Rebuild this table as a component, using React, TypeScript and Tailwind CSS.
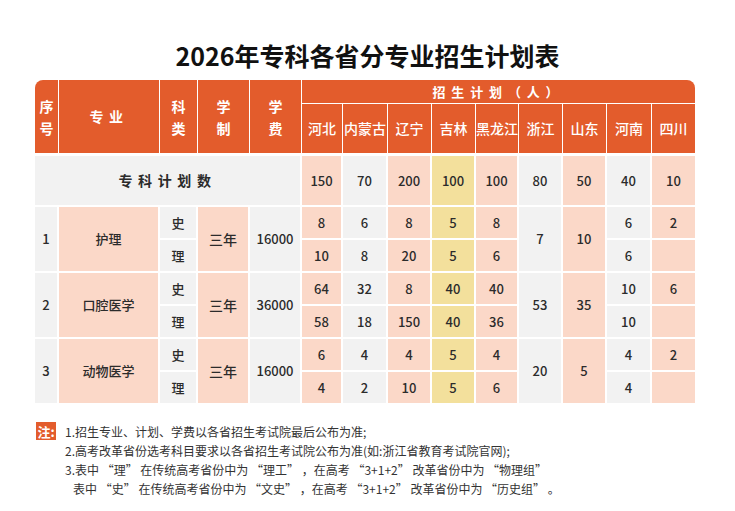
import React from "react"

const HEAD_COLS = "grid-cols-[23px_100px_37px_51px_51px_40px_44px_43px_43px_42px_43px_43px_44px_43px]"
const BODY_COLS = "grid-cols-[22px_99px_36px_50px_50px_39px_43px_42px_42px_41px_42px_42px_43px_43px]"

const peach = "bg-[#fbd8c8]"
const gray = "bg-[#f2f2f2]"
const yellow = "bg-[#f3e09c]"

const provinces = ["河北", "内蒙古", "辽宁", "吉林", "黑龙江", "浙江", "山东", "河南", "四川"]
const provinceBg = [peach, gray, peach, yellow, peach, gray, peach, gray, peach]
const totals = [150, 70, 200, 100, 100, 80, 50, 40, 10]

const majors = [
  {
    no: "1",
    name: "护理",
    fee: "16000",
    // [史, 理] per province; single value = merged cell
    values: [[8, 10], [6, 8], [8, 20], [5, 5], [8, 6], 7, 10, [6, 6], [2, ""]],
  },
  {
    no: "2",
    name: "口腔医学",
    fee: "36000",
    values: [[64, 58], [32, 18], [8, 150], [40, 40], [40, 36], 53, 35, [10, 10], [6, ""]],
  },
  {
    no: "3",
    name: "动物医学",
    fee: "16000",
    values: [[6, 4], [4, 2], [4, 10], [5, 5], [4, 6], 20, 5, [4, 4], [2, ""]],
  },
]

function Cell({ className = "", children }: { className?: string; children?: React.ReactNode }) {
  return <div className={`flex items-center justify-center ${className}`}>{children}</div>
}

function MajorRows({ m }: { m: (typeof majors)[number] }) {
  const first: React.ReactNode[] = []
  const second: React.ReactNode[] = []
  m.values.forEach((v, i) => {
    if (Array.isArray(v)) {
      first.push(<Cell key={`a${i}`} className={provinceBg[i]}>{v[0]}</Cell>)
      second.push(<Cell key={`b${i}`} className={provinceBg[i]}>{v[1]}</Cell>)
    } else {
      first.push(
        <Cell key={`a${i}`} className={`row-span-2 ${provinceBg[i]}`}>
          {v}
        </Cell>
      )
    }
  })
  return (
    <>
      <Cell className={`row-span-2 ${gray}`}>{m.no}</Cell>
      <Cell className={`row-span-2 ${peach}`}>{m.name}</Cell>
      <Cell className={gray}>史</Cell>
      <Cell className={`row-span-2 ${peach} text-[14px]`}>三年</Cell>
      <Cell className={`row-span-2 ${gray}`}>{m.fee}</Cell>
      {first}
      <Cell className={gray}>理</Cell>
      {second}
    </>
  )
}

export default function App() {
  return (
    <div
      className="w-[735px] h-[511px] bg-white text-[#2b2b2b]"
      style={{ fontFamily: '"Noto Sans CJK SC", "Noto Sans", sans-serif' }}
    >
      <h1 className="pt-[38px] text-center text-[25px] leading-[34px] font-bold text-[#111]">
        2026年专科各省分专业招生计划表
      </h1>

      <div className="mt-[8px] ml-[35px] w-[660px]">
        {/* header */}
        <div className={`grid ${HEAD_COLS} grid-rows-[23px_49px] gap-px text-white font-bold text-[14px]`}>
          <Cell className="row-span-2 flex-col leading-[22px] bg-[#e35c2c] rounded-tl-lg">
            <span>序</span>
            <span>号</span>
          </Cell>
          <Cell className="row-span-2 bg-[#e35c2c] tracking-[0.4em]">专业</Cell>
          <Cell className="row-span-2 flex-col leading-[22px] bg-[#e35c2c]">
            <span>科</span>
            <span>类</span>
          </Cell>
          <Cell className="row-span-2 flex-col leading-[22px] bg-[#e35c2c]">
            <span>学</span>
            <span>制</span>
          </Cell>
          <Cell className="row-span-2 flex-col leading-[22px] bg-[#e35c2c]">
            <span>学</span>
            <span>费</span>
          </Cell>
          <Cell className="col-span-9 bg-[#e35c2c] rounded-tr-lg tracking-[0.45em] text-[13px]">
            招生计划（人）
          </Cell>
          {provinces.map((p) => (
            <Cell key={p} className="bg-[#e35c2c] font-medium text-[14px]">
              {p}
            </Cell>
          ))}
        </div>

        {/* body */}
        <div
          className={`mt-[3px] grid ${BODY_COLS} grid-rows-[49px_31px_31px_31px_31px_31px_31px] gap-[2px] text-[13px] font-medium`}
        >
          <Cell className={`col-span-5 ${gray} font-bold text-[14px] tracking-[0.4em]`}>专科计划数</Cell>
          {totals.map((t, i) => (
            <Cell key={i} className={provinceBg[i]}>
              {t}
            </Cell>
          ))}
          {majors.map((m) => (
            <MajorRows key={m.no} m={m} />
          ))}
        </div>
      </div>

      <div className="mt-[19px] ml-[36px] flex gap-[9px] text-[12px] leading-[19px] text-[#333]">
        <div className="h-[18px] w-[20px] bg-[#e35c2c] text-white font-bold text-[13px] flex items-center justify-center">
          注:
        </div>
        <div>
          <p>1.招生专业、计划、学费以各省招生考试院最后公布为准;</p>
          <p>2.高考改革省份选考科目要求以各省招生考试院公布为准(如:浙江省教育考试院官网);</p>
          <p>3.表中 “理” 在传统高考省份中为 “理工” ，在高考 “3+1+2” 改革省份中为 “物理组”</p>
          <p className="pl-[8px]">表中 “史” 在传统高考省份中为 “文史” ，在高考 “3+1+2” 改革省份中为 “历史组” 。</p>
        </div>
      </div>
    </div>
  )
}
